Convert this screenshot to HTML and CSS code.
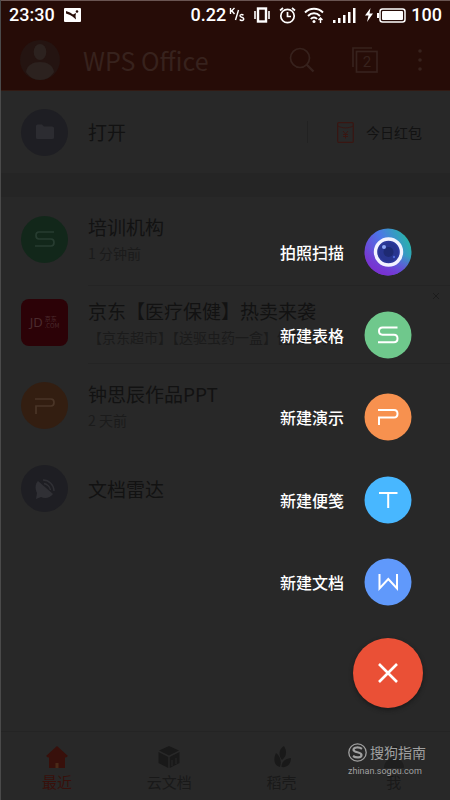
FILE: index.html
```html
<!DOCTYPE html>
<html lang="zh-CN">
<head>
<meta charset="utf-8">
<meta name="viewport" content="width=device-width, initial-scale=1">
<title>WPS Office</title>
<link rel="stylesheet" href="styles.css">
</head>
<body>
<div class="app">
  <header class="top">
    <div class="status">
      <span class="clock">23:30</span>
      <svg class="pic" width="17" height="14" viewBox="0 0 17 14"><rect width="17" height="14" rx="1" fill="#fff"/><path d="M2 3L6 4.500L9 6.500L12 5L11.500 8L12 11.500L8.500 8.500L6 7L2 5.500Z" fill="#260c07"/><circle cx="13" cy="3.500" r="1.300" fill="#260c07"/></svg>
      <span class="speed">0.22</span>
      <svg width="16" height="16" viewBox="0 0 16 16" fill="none" stroke="#fff" stroke-width="1.400"><path d="M1.500 1V7M5.500 1L2 4.500M2.800 3.700L5.500 7M9.500 3L6.500 13"/><path d="M14.500 8.300C13 7 10.800 7.600 11 9C11.200 10.500 14.800 10 14.800 12C14.800 13.700 12 14 10.700 12.500"/></svg>
      <svg class="vib" width="16" height="16" viewBox="0 0 16 16" fill="none" stroke="#fff"><rect x="4" y="1.500" width="8" height="13" stroke-width="2.400"/><path d="M1 4V12M15 4V12" stroke-width="1.600"/></svg>
      <svg class="alarm" width="17" height="17" viewBox="0 0 17 17" fill="none" stroke="#fff" stroke-width="1.700"><circle cx="8.500" cy="9" r="6.700"/><path d="M8.500 5V9.500H12M1 3.500L4 1M16 3.500L13 1"/></svg>
      <svg class="wifi" width="20" height="17" viewBox="0 0 20 17" fill="none" stroke="#fff" stroke-width="1.900"><path d="M1 5.500C6 .5 14 .5 19 5.500M4 9C7.500 5.300 12.500 5.300 16 9M6.800 12C8.500 10 11.500 10 13 12"/><circle cx="10" cy="14.500" r="1.500" fill="#fff" stroke="none"/><path d="M16.500 11V16M14.500 13L16.500 11L18.500 13" stroke-width="1.400"/></svg>
      <svg class="signal" width="23" height="15" viewBox="0 0 23 15" fill="#fff"><path d="M0 12h2.500v3H0zM5 10h2.500v5H5zM10 7h2.500v8H10zM15 4h2.500v11H15zM20 0h2.500v15H20z"/></svg>
      <svg class="bolt" width="8" height="14" viewBox="0 0 8 14" fill="#fff"><path d="M5.500 0L0 7.500H3.500L2 14L8 5.500H4.500Z"/></svg>
      <svg class="battery" width="29" height="15" viewBox="0 0 29 15"><rect x="3" y="1" width="25" height="13" rx="2.500" fill="none" stroke="#fff" stroke-width="1.500"/><rect x="5" y="3" width="21" height="9" rx="1" fill="#fff"/><path d="M1 5V10" stroke="#fff" stroke-width="2"/></svg>
      <span class="level">100</span>
    </div>
    <div class="bar">
      <button class="plain" aria-label="账户"><svg width="40" height="40" viewBox="0 0 40 40"><circle cx="20" cy="20" r="20" fill="#241411"/><ellipse cx="20" cy="12" rx="6.300" ry="8" fill="#2c221f"/><path d="M6 32C7 25 13 22 20 22S33 25 34 32C31 37 26 40 20 40S9 37 6 32Z" fill="#2c221f"/></svg></button>
      <h1>WPS Office</h1>
      <button class="plain search" aria-label="搜索"><svg width="26" height="26" viewBox="0 0 26 26" fill="none" stroke="#37221d"><circle cx="11" cy="11" r="9.500" stroke-width="1.700"/><path d="M17.500 17.500L24.500 24.500" stroke-width="2.400"/></svg></button>
      <button class="plain tabs" aria-label="窗口"><svg width="26" height="26" viewBox="0 0 26 26" fill="none" stroke="#37221d" stroke-width="1.700"><path d="M1 20V1H20"/><rect x="4.500" y="4.500" width="20.500" height="20.500"/></svg><span>2</span></button>
      <button class="plain more" aria-label="更多"><svg width="4" height="22" viewBox="0 0 4 22" fill="#37221d"><circle cx="2" cy="2" r="1.800"/><circle cx="2" cy="11" r="1.800"/><circle cx="2" cy="20" r="1.800"/></svg></button>
    </div>
  </header>
  <main>
    <section class="open">
      <span class="disc slate"><svg width="18" height="16" viewBox="0 0 18 16" fill="#2c2c31"><path d="M0 2Q0 .5 1.500 .5H6L8 2.500H16Q18 2.500 18 4V13.500Q18 15 16.500 15H1.500Q0 15 0 13.500Z"/></svg></span>
      <h2>打开</h2>
      <button class="plain packet"><svg width="17" height="21" viewBox="0 0 17 21" fill="none" stroke="#391612" stroke-width="1.200"><rect x=".7" y=".7" width="15.600" height="19.600" rx="1"/><path d="M1 4C5 6.500 12 6.500 16 4M6 9L8.500 12L11 9M8.500 12V16.500M6 12.500H11M6 14.500H11" stroke-width="1"/></svg>今日红包</button>
    </section>
    <ul class="files">
      <li class="first"><span class="disc green"><svg width="20" height="16" viewBox="0 0 20 16" fill="none" stroke="#273c30" stroke-width="1.700"><path d="M19 1H4Q1 1 1 4.500T4 8H16Q19 8 19 11.500T16 15H0"/></svg></span><div class="body"><h2>培训机构</h2><p>1 分钟前</p></div></li>
      <li class="ad"><span class="disc jd"><b>JD</b><span class="tag"><span>京东</span><span>.COM</span></span></span><div class="body"><h2>京东【医疗保健】热卖来袭</h2><p>【京东超市】【送驱虫药一盒】健康尽享...</p></div><button class="plain close" aria-label="关闭"><svg width="8" height="8" viewBox="0 0 8 8" stroke="#1c1c1c"><path d="M1 1L7 7M7 1L1 7"/></svg></button></li>
      <li><span class="disc orange"><svg width="20" height="16" viewBox="0 0 20 16" fill="none" stroke="#4a3527" stroke-width="1.700"><path d="M0 1H16Q19 1 19 4.500T16 8H1V16"/></svg></span><div class="body"><h2>钟思辰作品PPT</h2><p>2 天前</p></div></li>
      <li><span class="disc slate"><svg width="20" height="20" viewBox="0 0 20 20" fill="#303035"><path d="M3 2L18 15C15 19 10 20 6 18L1 20L2 14C0 10 0 5 3 2Z"/><path d="M8 1C14 1 19 6 19 12M9 4.500C12 5 15 8 15.500 11" fill="none" stroke="#303035" stroke-width="1.400"/></svg></span><div class="body"><h2>文档雷达</h2></div></li>
    </ul>
  </main>
  <nav class="nav">
    <a href="#" class="on"><svg width="22" height="22" viewBox="0 0 22 22" fill="#38100b"><path d="M11 0L22 10L20 11.500H19V22H3V11.500H2L0 10Z"/><path d="M9.500 17H12.500V22H9.500Z" fill="#4a2a18"/></svg>最近</a>
    <a href="#"><svg width="22" height="22" viewBox="0 0 22 22" fill="#191919"><path d="M11 0L21 4.500L11 9.500L1 4.500ZM.5 6L10.300 11V22L.5 17ZM21.500 6L11.700 11V22L21.500 17Z"/><path d="M14 14V20M18 12V18" stroke="#282828"/></svg>云文档</a>
    <a href="#"><svg width="22" height="22" viewBox="0 0 22 22" fill="#191919"><path d="M13 0C16 5 16 10 11 14C7 9 8 3 13 0ZM5 7C9 10 11 15 9 21C3 20 2 13 5 7ZM20 12C20 18 16 22 10.500 21C10.500 16 14 12.500 20 12Z"/></svg>稻壳</a>
    <a href="#"><svg width="22" height="22" viewBox="0 0 22 22" fill="#1e1e1e"><circle cx="11" cy="5" r="5"/><path d="M1 22C1 9 21 9 21 22Z"/></svg>我</a>
  </nav>
  <div class="create">
    <button class="plain item">拍照扫描<svg width="48" height="48" viewBox="0 0 48 48"><defs><linearGradient id="cam" x1="0" y1=".75" x2="1" y2=".25"><stop offset="0" stop-color="#7a35cf"/><stop offset=".5" stop-color="#4c76e8"/><stop offset="1" stop-color="#25b9a5"/></linearGradient><linearGradient id="low" x1=".6" y1="0" x2=".4" y2="1"><stop offset=".5" stop-color="#7a2fd0" stop-opacity="0"/><stop offset="1" stop-color="#7a2fd0"/></linearGradient></defs><circle cx="24" cy="24" r="23.500" fill="url(#cam)"/><circle cx="24" cy="24" r="23.500" fill="url(#low)"/><circle cx="24.500" cy="24" r="13" fill="#2c399c" stroke="#f2f3ff" stroke-width="3.400"/><circle cx="24.500" cy="24" r="9.500" fill="#28358f"/><circle cx="24.500" cy="24" r="5" fill="#1e2a73"/><circle cx="20" cy="19" r="2" fill="#8da6f5"/><circle cx="30" cy="29" r="1.200" fill="#4c66d4"/></svg></button>
    <button class="plain item">新建表格<svg width="48" height="48" viewBox="0 0 48 48"><circle cx="24" cy="24" r="23.500" fill="#6fc88c"/><path d="M33.500 16.500H18.500Q15 16.500 15 20T18.500 23.700H30Q33.500 23.700 33.500 27.500T30 31.300H14" fill="none" stroke="#fff" stroke-width="2"/></svg></button>
    <button class="plain item">新建演示<svg width="48" height="48" viewBox="0 0 48 48"><circle cx="24" cy="24" r="23.500" fill="#f7914f"/><path d="M14 17H30Q33.500 17 33.500 20.800T30 24.600H15V32" fill="none" stroke="#fff" stroke-width="2"/></svg></button>
    <button class="plain item">新建便笺<svg width="48" height="48" viewBox="0 0 48 48"><circle cx="24" cy="24" r="23.500" fill="#48b7ff"/><path d="M15 17H33.500M24.200 17V32" fill="none" stroke="#fff" stroke-width="2"/></svg></button>
    <button class="plain item">新建文档<svg width="48" height="48" viewBox="0 0 48 48"><circle cx="24" cy="24" r="23.500" fill="#6099fb"/><path d="M15.500 16V30.500L24.300 21L33 30.500V16" fill="none" stroke="#fff" stroke-width="2"/></svg></button>
  </div>
  <button class="plain fab" aria-label="关闭菜单"><svg width="20" height="20" viewBox="0 0 20 20" stroke="#fff" stroke-width="2.600"><path d="M1 1L19 19M19 1L1 19"/></svg></button>
  <div class="mark"><div class="brand"><svg width="19" height="19" viewBox="0 0 19 19" fill="none" stroke="#a0a0a0"><circle cx="9.500" cy="9.500" r="8.700" stroke-width="1.300"/><path d="M14 5.800C11 3.800 5.500 4 5.500 6.800C5.500 10 13.500 8.500 13.500 12C13.500 15 8 15 5 13" stroke-width="2.200"/></svg>搜狗指南</div><div class="site">zhinan.sogou.com</div></div>
</div>
</body>
</html>
```
FILE: styles.css
```css
* { box-sizing: border-box; }
body {
  margin: 0;
  background: #282828;
  color: #121212;
  font-family: "Noto Sans CJK SC", sans-serif;
}
h1, h2, p, ul { margin: 0; padding: 0; font-weight: 400; }
svg { display: block; flex: none; }
.plain {
  display: flex;
  align-items: center;
  padding: 0;
  border: 0;
  background: none;
  color: inherit;
  font: inherit;
}
.app {
  position: relative;
  display: flex;
  flex-direction: column;
  min-height: 100vh;
  border-left: 1px solid #4a4a4a;
}
.top {
  background: #260c07;
  border-top: 1px solid #6a5552;
  border-bottom: 1px solid #321a13;
}
.status {
  display: flex;
  align-items: center;
  height: 28px;
  padding: 0 8px;
  color: #fff;
  font: 500 18px/28px Roboto, sans-serif;
}
.pic { margin-left: 9px; }
.speed { margin-left: auto; margin-right: 3px; }
.vib { margin-left: 9px; }
.alarm { margin-left: 9px; }
.wifi { margin-left: 8px; }
.signal { margin-left: 9px; }
.bolt { margin-left: 9px; }
.battery { margin-left: 4px; margin-right: 5px; }
.bar {
  display: flex;
  align-items: center;
  height: 61px;
  padding: 0 28px 0 19px;
}
h1 {
  margin-left: 23px;
  color: #37221d;
  font-size: 25px;
  line-height: 36px;
}
.search { margin-left: auto; }
.tabs { position: relative; margin-left: 37px; }
.tabs span {
  position: absolute;
  inset: 4px 0 0 4px;
  color: #37221d;
  font: 15px/22px Roboto, sans-serif;
  text-align: center;
}
.more { margin-left: 40px; }
main { flex: 1; }
h2 { font-size: 19px; line-height: 28px; }
.disc {
  display: flex;
  flex: none;
  align-items: center;
  justify-content: center;
  width: 47px;
  height: 47px;
  margin-right: 20px;
  border-radius: 50%;
}
.slate { background: #1e1e23; }
.green { background: #12271a; }
.orange { background: #331e11; }
.jd {
  gap: 2px;
  border-radius: 8px;
  background: #2c0207;
  color: #4b2b2e;
}
.jd b { font: 13px/16px "Noto Sans", sans-serif; }
.tag {
  display: flex;
  flex-direction: column;
  font-size: 6px;
  line-height: 7px;
}
.open {
  display: flex;
  align-items: center;
  height: 106px;
  padding: 0 28px 0 20px;
  border-bottom: 24px solid #252525;
}
.packet {
  gap: 12px;
  height: 22px;
  margin-left: auto;
  padding-left: 29px;
  border-left: 1px solid #222;
  font-size: 14px;
}
.files { list-style: none; }
li {
  position: relative;
  display: flex;
  align-items: center;
  height: 83px;
  padding-left: 20px;
}
.body { flex: 1; min-width: 0; }
.body p {
  color: #1b1b1b;
  font-size: 14px;
  line-height: 24px;
}
.first { height: 88px; padding-bottom: 4px; }
.ad { height: 79px; padding-bottom: 5px; }
.ad .body {
  align-self: stretch;
  margin-bottom: -5px;
  padding-top: 11px;
  border-top: 1px solid #242424;
  border-bottom: 1px solid #242424;
}
.ad p { white-space: nowrap; }
.close { position: absolute; top: 7px; right: 10px; }
.nav {
  display: grid;
  grid-template-columns: repeat(4, 1fr);
  height: 69px;
  padding-top: 14px;
  border-top: 1px solid #242424;
}
.nav a {
  display: flex;
  flex-direction: column;
  align-items: center;
  gap: 3px;
  color: #191919;
  font-size: 15px;
  line-height: 22px;
  text-decoration: none;
}
.nav .on { color: #38100b; }
.create {
  position: absolute;
  right: 38px;
  bottom: 194px;
  display: flex;
  flex-direction: column;
  justify-content: space-between;
  height: 378px;
}
.item {
  gap: 20px;
  color: #fff;
  font-size: 16px;
  font-weight: 500;
  line-height: 24px;
}
.fab {
  position: absolute;
  right: 27px;
  bottom: 92px;
  justify-content: center;
  width: 70px;
  height: 70px;
  border-radius: 50%;
  background: #ea5036;
  box-shadow: 0 2px 4px #1a1a1a;
}
.mark {
  position: absolute;
  right: 24px;
  bottom: 20px;
  color: #a0a0a0;
}
.brand {
  display: flex;
  align-items: center;
  gap: 3px;
  font-size: 14px;
  line-height: 20px;
}
.site { font: 9px/18px Roboto, sans-serif; }
```
